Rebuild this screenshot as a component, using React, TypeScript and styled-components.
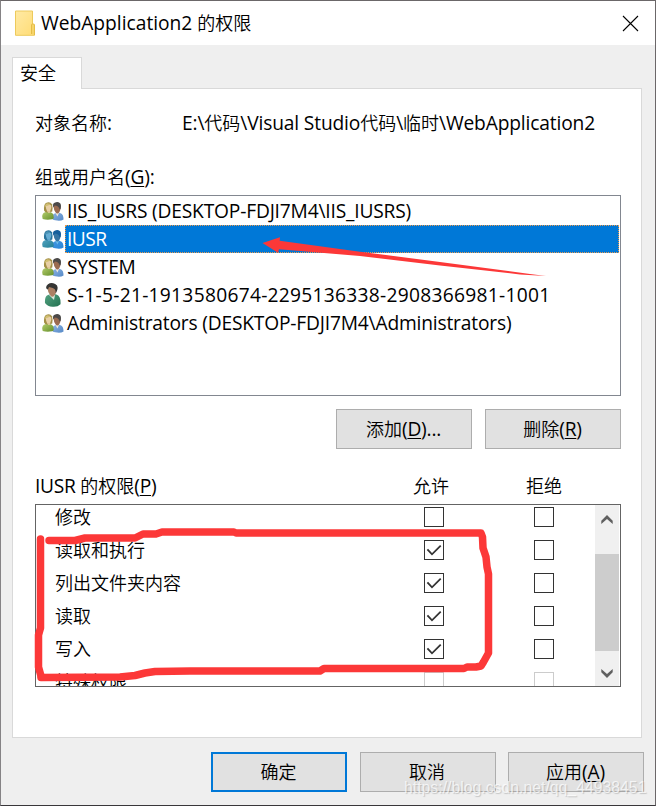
import React from "react";
import styled, { createGlobalStyle, css } from "styled-components";

const GlobalStyle = createGlobalStyle`
  * { box-sizing: border-box; }
  body { margin: 0; background: #efefef; }
`;

const Dialog = styled.main`
  position: relative;
  width: 656px;
  height: 806px;
  display: flex;
  flex-direction: column;
  overflow: hidden;
  background: #efefef;
  border: 1px solid #6b6769;
  border-left-color: #858385;
  border-bottom-color: #39373a;
  color: #000;
  font-family: "Noto Sans CJK SC", sans-serif;
  font-weight: 350;
  font-size: 18px;
  line-height: 24px;
  white-space: nowrap;
`;

const Latin = styled.span<{ $spacing?: number }>`
  font-family: "Open Sans", "Noto Sans", sans-serif;
  font-weight: 400;
  font-size: 19.2px;
  line-height: 20px;
  letter-spacing: ${({ $spacing = -0.2 }) => $spacing}px;
  white-space: pre;
`;

const Key = styled.span`
  text-decoration: underline;
  text-decoration-thickness: 1px;
  text-underline-offset: 2px;
`;

const TitleBar = styled.header`
  display: flex;
  align-items: center;
  flex: none;
  height: 44px;
  padding: 0 16px 0 14px;
  background: #fff;
`;

const Title = styled.h1`
  flex: 1;
  margin: -2px 0 0 6px;
  font: inherit;
`;

const TabStrip = styled.nav`
  flex: none;
  height: 43px;
  padding: 12px 0 0 11px;
`;

const Tab = styled.div`
  position: relative;
  z-index: 1;
  width: 70px;
  height: 32px;
  padding: 2px 0 0 7px;
  background: #fff;
  border: 1px solid #d9d9d9;
  border-bottom: 0;
`;

const Panel = styled.section`
  flex: none;
  width: 630px;
  height: 650px;
  margin-left: 11px;
  padding: 21px 20px 0 22px;
  background: #fff;
  border: 1px solid #d9d9d9;
`;

const ObjectRow = styled.div`
  display: grid;
  grid-template-columns: 147px 1fr;
  height: 24px;
`;

const GroupLabel = styled.div`
  height: 24px;
  margin: 30px 0 7px;
`;

const UserList = styled.div`
  width: 586px;
  height: 201px;
  padding: 1px 1px 0 6px;
  border: 1px solid #828790;
`;

const UserRow = styled.div`
  display: flex;
  height: 28px;
  align-items: center;
`;

const UserName = styled.div<{ $selected?: boolean }>`
  flex: 1;
  height: 28px;
  padding: 0 0 0 1px;
  border: 1px solid transparent;
  ${({ $selected }) =>
    $selected &&
    css`
      color: #fff;
      background: #0078d7;
      border: 1px dotted #e79a50;
    `}
`;

const ButtonRow = styled.div<{ $footer?: boolean }>`
  display: flex;
  justify-content: flex-end;
  gap: ${({ $footer }) => ($footer ? "12.5px" : "13px")};
  width: ${({ $footer }) => ($footer ? "643px" : "586px")};
  margin-top: ${({ $footer }) => ($footer ? "14px" : "13px")};
`;

const Button = styled.button<{ $primary?: boolean }>`
  width: 136px;
  height: 40px;
  padding: 0 1px 2px 0;
  font: inherit;
  color: inherit;
  background: #e1e1e1;
  border: ${({ $primary }) => ($primary ? "2px solid #0078d7" : "1px solid #adadad")};
`;

const PermissionHeader = styled.div`
  display: grid;
  grid-template-columns: 378px 113px 1fr;
  height: 24px;
  margin: 24px 0 7px;
`;

const PermissionList = styled.div`
  display: flex;
  width: 586px;
  height: 183px;
  padding-right: 1px;
  overflow: hidden;
  border: 1px solid #646464;
`;

const PermissionRows = styled.div`
  flex: 1;
  margin-top: -4px;
`;

const PermissionRow = styled.div`
  display: grid;
  grid-template-columns: 369px 110px 20px;
  height: 33px;
  padding: 3px 0 0 19px;
`;

const CheckBox = styled.div<{ $disabled?: boolean }>`
  display: grid;
  place-items: center;
  width: 20px;
  height: 20px;
  margin-top: 3px;
  border: 1px solid ${({ $disabled }) => ($disabled ? "#ccc" : "#333")};
`;

const ScrollBar = styled.div`
  display: grid;
  grid-template-rows: 49px 97px 35px;
  justify-items: center;
  width: 24px;
  background: #f0f0f0;
`;

const Thumb = styled.div`
  width: 24px;
  background: #cdcdcd;
`;

const Arrow = styled.svg<{ $down?: boolean }>`
  margin-top: ${({ $down }) => ($down ? "17px" : "10px")};
  transform: ${({ $down }) => ($down ? "scaleY(-1)" : "none")};
`;

const Annotations = styled.svg`
  position: absolute;
  left: -1px;
  top: -1px;
  z-index: 2;
  pointer-events: none;
`;

const Watermark = styled.div`
  position: absolute;
  left: 403px;
  top: 775px;
  font: 15.8px/24px "Liberation Sans", sans-serif;
  color: rgba(255, 255, 255, 0.72);
  text-shadow: 1px 1px 1px rgba(120, 120, 120, 0.35);
`;

const FolderIcon = () => (
  <svg width="20" height="26" viewBox="0 0 20 26">
    <defs>
      <linearGradient id="folder" x2="1" y2="1">
        <stop stopColor="#ffeaa5" />
        <stop offset="1" stopColor="#ffdc75" />
      </linearGradient>
    </defs>
    <path d="M.5 1h17v13l2 1.5v9.8H.5z" fill="url(#folder)" stroke="#edca5c" />
    <path d="M16.5 24V15q0-1 1-1h1q1 0 1 1v10" fill="#f6d469" stroke="#e5bd47" />
  </svg>
);

const Gradients = () => (
  <svg width="0" height="0" viewBox="0 0 1 1">
    <defs>
      <linearGradient id="green" x2="1" y2="1"><stop stopColor="#b5cd6d" /><stop offset="1" stopColor="#648f2a" /></linearGradient>
      <linearGradient id="blue" x2="1" y2="1"><stop stopColor="#8eb4e4" /><stop offset="1" stopColor="#5589c6" /></linearGradient>
      <linearGradient id="selGreen" x2="1" y2="1"><stop stopColor="#52a2c0" /><stop offset="1" stopColor="#238095" /></linearGradient>
      <linearGradient id="selBlue" x2="1" y2="1"><stop stopColor="#4697e0" /><stop offset="1" stopColor="#2786d8" /></linearGradient>
      <linearGradient id="teal" x2="1" y2="1"><stop stopColor="#55a483" /><stop offset="1" stopColor="#237150" /></linearGradient>
    </defs>
  </svg>
);

const GroupIcon = ({ selected }: { selected?: boolean }) => (
  <svg width="23" height="20" viewBox="0 -0.5 23.5 20">
    <path d="M10.5 17q-.2-4 2.5-5l3-1.3 3 1q3 1 3 6.5-3 2-8.5.8-3 0-3-2" fill={selected ? "url(#selBlue)" : "url(#blue)"} />
    <path d="m13.5 11 2.2 4 2-4" fill={selected ? "#6dbde8" : "#eee9dc"} />
    <path d="M11.8 5q0-3.5 4-3.5 3 0 3.2 4 0 3-1.2 5-2 3-4 .3-1.8-2.2-2-5.8" fill={selected ? "#3775a3" : "#9b6b50"} />
    <path d="M11.4 5q-.7-3 1.5-4 3-1.3 5.3.2 1.8 1.2.9 6l-1 1Q17 4 13 4q-1 2-1.3 2" fill={selected ? "#155e9b" : "#4b4948"} />
    <path d="M.2 15q0-3.3 3.1-4.2l3-.8 3.2 1q2.5 1 2.5 5.5 0 1.3-1.7 1.5-5.3 1-9.6-.3Z" fill={selected ? "url(#selGreen)" : "url(#green)"} />
    <path d="M2.1 9Q1.6 3 4 1.3q4-2 6.2 1.2 1 3.2.3 7.5l-3 1-4-.2" fill={selected ? "#28739c" : "#a38f45"} />
    <path d="M4 4q3.8-3 5.5.2.5 3-1 5.1-1.7 2.2-3.5-.1Q3.5 7 4 4m1 6 2.2 1.8L9 10" fill={selected ? "#67add3" : "#e8cfa6"} />
    <path d="M3 6q-.2-4 2.5-4.5l3.2.7L6.5 4 4 4.6" fill={selected ? "#4b92b5" : "#d0be71"} />
  </svg>
);

const PersonIcon = () => (
  <svg width="23" height="24" viewBox="0 0 23 24">
    <path d="M3 20q-.5-7 3-8l5-1.5 4 1.3q4 1.7 3.5 9.5-3 3-8 2.5-5-.3-7.5-3.8" fill="url(#teal)" />
    <path d="m7 12 5 5 1-5" fill="#dce8db" />
    <path d="M5.5 5q0-3.8 4.6-3.8 4.3 0 4.3 5.5 0 3-2 5.8-2 2.5-4 0Q5.6 9 5.5 5" fill="#ac8063" />
    <path d="M4.8 6Q3 3.5 6 1.3 9-1 13.2 1q4 2 1.5 7.4l-1 2Q14 6 10.8 5L7 4 6 6.5" fill="#353534" />
  </svg>
);

const CheckMark = () => (
  <svg width="18" height="18" viewBox="0 0 18 18">
    <path d="m2.4 8.3 4.6 5L15.7 4.7" fill="none" stroke="#333" strokeWidth="1.8" />
  </svg>
);

const ScrollArrow = ({ down }: { down?: boolean }) => (
  <Arrow $down={down} width="12" height="10" viewBox="0 0 12 10">
    <path d="M.3 9V5.7L6 0l5.7 5.7V9L6 3.9z" fill="#606060" />
  </Arrow>
);

const users = [
  { name: "IIS_IUSRS (DESKTOP-FDJI7M4\\IIS_IUSRS)", spacing: -0.18 },
  { name: "IUSR", spacing: -0.5, selected: true },
  { name: "SYSTEM", spacing: -0.3 },
  { name: "S-1-5-21-1913580674-2295136338-2908366981-1001", spacing: 0.28, person: true },
  { name: "Administrators (DESKTOP-FDJI7M4\\Administrators)", spacing: -0.18 },
];

const permissions = [
  { name: "修改" },
  { name: "读取和执行", allowed: true },
  { name: "列出文件夹内容", allowed: true },
  { name: "读取", allowed: true },
  { name: "写入", allowed: true },
  { name: "特殊权限", disabled: true },
];

export default function App() {
  return (
    <>
      <GlobalStyle />
      <Dialog>
        <TitleBar>
          <FolderIcon />
          <Title><Latin $spacing={0}>WebApplication2 </Latin>的权限</Title>
          <svg width="17" height="17" viewBox="0 0 17 17">
            <path d="m1 1 15 15M16 1 1 16" stroke="#000" strokeWidth="1.1" />
          </svg>
        </TitleBar>
        <TabStrip><Tab>安全</Tab></TabStrip>
        <Panel>
          <ObjectRow>
            <div>对象名称<Latin>:</Latin></div>
            <div><Latin $spacing={-0.15}>E:\</Latin>代码<Latin $spacing={-0.15}>\Visual Studio</Latin>代码<Latin>\</Latin>临时<Latin $spacing={-0.15}>\WebApplication2</Latin></div>
          </ObjectRow>
          <GroupLabel>组或用户名<Latin>(<Key>G</Key>):</Latin></GroupLabel>
          <UserList>
            {users.map((user) => (
              <UserRow key={user.name}>
                {user.person ? <PersonIcon /> : <GroupIcon selected={user.selected} />}
                <UserName $selected={user.selected}><Latin $spacing={user.spacing}>{user.name}</Latin></UserName>
              </UserRow>
            ))}
          </UserList>
          <ButtonRow>
            <Button>添加<Latin>(<Key>D</Key>)...</Latin></Button>
            <Button>删除<Latin>(<Key>R</Key>)</Latin></Button>
          </ButtonRow>
          <PermissionHeader>
            <div><Latin $spacing={-0.3}>IUSR </Latin>的权限<Latin>(<Key>P</Key>)</Latin></div>
            <div>允许</div>
            <div>拒绝</div>
          </PermissionHeader>
          <PermissionList>
            <PermissionRows>
              {permissions.map((item) => (
                <PermissionRow key={item.name}>
                  <div>{item.name}</div>
                  <CheckBox $disabled={item.disabled}>{item.allowed && <CheckMark />}</CheckBox>
                  <CheckBox $disabled={item.disabled} />
                </PermissionRow>
              ))}
            </PermissionRows>
            <ScrollBar><ScrollArrow /><Thumb /><ScrollArrow down /></ScrollBar>
          </PermissionList>
        </Panel>
        <ButtonRow $footer>
          <Button $primary>确定</Button>
          <Button>取消</Button>
          <Button>应用<Latin>(<Key>A</Key>)</Latin></Button>
        </ButtonRow>
        <Gradients />
        <Annotations width="656" height="806" viewBox="0 0 656 806">
          <path d="M262.5 243 280 237.3l-.3 3.5L360 251.7l80 10.2 90 12 16 2-26-1.5-80-9-80-9.4-81-6.7-1 3.5z" fill="#fc3838" />
          <g fill="none" stroke="#fc3838" strokeWidth="7.5" strokeLinecap="round" strokeLinejoin="round">
            <path d="M49 540.5h26l10-2.5h50l8-4h13l6-2h72l2 1h245l1.5 4 .5 11 3 9 1 10 1.5 7v79l-5 9-2.5 4-5 1h-9l-3 1.5H324l-4 2.5H190l-35 .5-10 1.5-10 2.5-15 1.5-79 .5" />
            <path d="M40.5 539v89l-2 7v32l2.5 9" />
          </g>
        </Annotations>
        <Watermark>https://blog.csdn.net/qq_44938451</Watermark>
      </Dialog>
    </>
  );
}
